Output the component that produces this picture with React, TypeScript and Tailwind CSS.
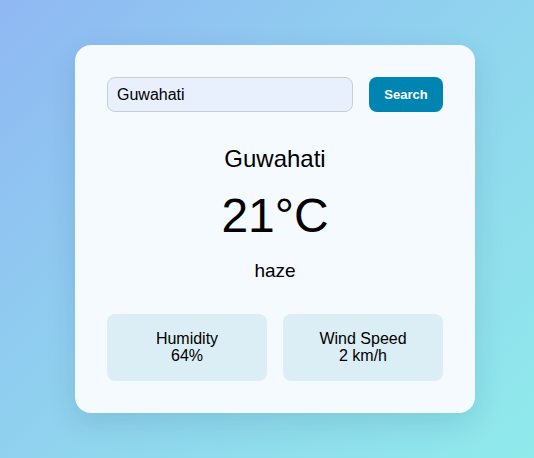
import React from "react";

export default function App() {
  return (
    <div
      className="h-[458px] w-full flex items-center justify-center pl-4 bg-[linear-gradient(135deg,#8fb8f3_0%,#90d6ee_55%,#8feaeb_100%)]"
      style={{ fontFamily: '"Liberation Sans", Arial, sans-serif' }}
    >
      <div className="w-[400px] rounded-2xl bg-[#f5faff] p-8 shadow-[0_10px_30px_rgba(0,40,80,0.12)]">
        <div className="flex gap-4">
          <input
            defaultValue="Guwahati"
            className="flex-1 min-w-0 h-[35px] rounded-lg border border-[#c9ced6] bg-[#e8f0fe] px-[9px] text-[16px] text-black outline-none"
          />
          <button className="w-[74px] h-[35px] rounded-lg bg-[#0085b2] text-white text-[13px] font-bold">
            Search
          </button>
        </div>
        <div className="mt-[33px] text-center text-[24px] leading-[28px] text-black">Guwahati</div>
        <div className="mt-[15px] text-center text-[48px] leading-[56px] text-black">21°C</div>
        <div className="mt-4 text-center text-[19px] leading-[22px] text-black">haze</div>
        <div className="mt-8 grid grid-cols-2 gap-4">
          <div className="h-[67px] rounded-lg bg-[#dbeef5] pt-4 text-center text-[16px] leading-[17px] text-black">
            <div>Humidity</div>
            <div>64%</div>
          </div>
          <div className="h-[67px] rounded-lg bg-[#dbeef5] pt-4 text-center text-[16px] leading-[17px] text-black">
            <div>Wind Speed</div>
            <div>2 km/h</div>
          </div>
        </div>
      </div>
    </div>
  );
}
